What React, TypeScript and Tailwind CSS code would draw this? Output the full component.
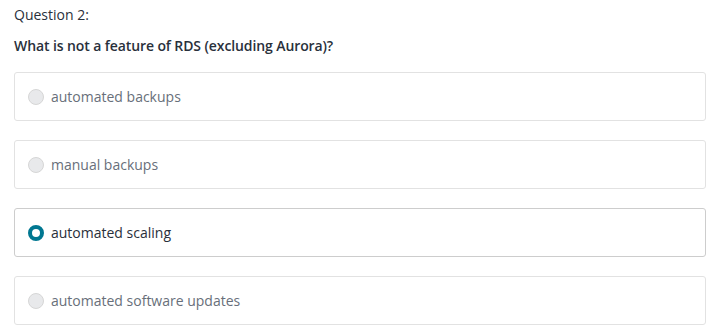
const options = [
  'automated backups',
  'manual backups',
  'automated scaling',
  'automated software updates',
];

export default function App() {
  const selected = 2;
  return (
    <div
      className="w-[720px] h-[334px] bg-white px-[14px] pt-[5px]"
      style={{ fontFamily: '"Open Sans", sans-serif' }}
    >
      <p className="text-[14px] leading-[20px] text-[#29303b]">Question 2:</p>
      <h2 className="mt-[11px] text-[14px] leading-[20px] font-semibold tracking-[-0.1px] text-[#29303b]">
        What is not a feature of RDS (excluding Aurora)?
      </h2>
      <div className="mt-[16px] flex flex-col gap-[19px]">
        {options.map((opt, i) => (
          <div
            key={opt}
            className={`h-[49px] flex items-center gap-[7px] pl-[13px] rounded-[3px] border ${
              i === selected ? 'border-[#cdcdcd]' : 'border-[#e2e2e2]'
            }`}
          >
            {i === selected ? (
              <span className="w-[16px] h-[16px] rounded-full border-[4px] border-[#007791] bg-white shrink-0" />
            ) : (
              <span className="w-[16px] h-[16px] rounded-full border border-[#d6d6d6] bg-[#e8e9eb] shrink-0" />
            )}
            <span
              className={`text-[14px] leading-[20px] ${
                i === selected ? 'text-[#29303b]' : 'text-[#686f7a]'
              }`}
            >
              {opt}
            </span>
          </div>
        ))}
      </div>
    </div>
  );
}
